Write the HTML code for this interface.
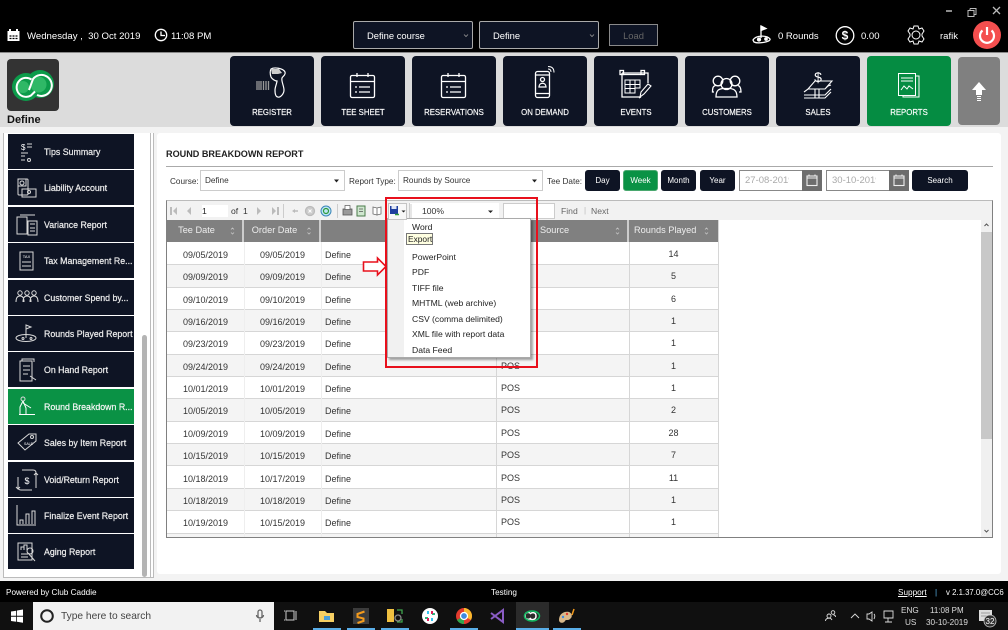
<!DOCTYPE html>
<html><head><meta charset="utf-8"><title>Round Breakdown Report</title>
<style>
html,body{margin:0;padding:0;width:1008px;height:630px;overflow:hidden;background:#f3f3f3}
body{position:relative;font-family:"Liberation Sans",sans-serif;color:#222}
div,span{position:absolute;box-sizing:border-box;white-space:nowrap}
.t{line-height:12px;height:12px}
.w{color:#fff}
.nav{top:56px;width:84px;height:70px;background:#0e1424;border-radius:4px;color:#fff;font-size:7.8px;text-align:center;padding-top:52px;line-height:10px;-webkit-text-stroke:.15px #fff}
.si{left:8px;width:126px;height:35px;background:#0e1424;color:#eee;font-size:8.8px;line-height:37px;padding-left:36px;-webkit-text-stroke:.2px #eee}
.btn{top:170px;height:21px;background:#0e1424;color:#fff;font-size:8px;text-align:center;line-height:22px;border-radius:3px}
.sel{top:170px;height:21px;background:#fff;border:1px solid #ccc;font-size:8.2px;line-height:20px;padding-left:4px;color:#333}
.lab{top:175px;font-size:8.2px;line-height:13px;color:#333}
.th{top:220px;height:22px;background:#808080;color:#eee;font-size:9.2px;line-height:21px;text-align:center;border-right:2px solid #ccc}
.r{left:167px;width:551px;height:22.35px;margin-top:1px;border-bottom:1.5px solid #d6d6d6;font-size:9px;color:#333;line-height:25px}
.r span{top:0}
.r .a{left:0;width:77px;text-align:center}
.r .b{left:77px;width:77px;text-align:center}
.r .c{left:158px}
.r .d{left:334px;top:-1px}
.r .e{left:462px;width:89px;text-align:center;top:-1px}
.g{background:#f4f4f4}
.m{left:412px;font-size:8.6px;line-height:12px;color:#222}
</style></head><body>

<div style="left:0;top:0;width:1008px;height:52px;background:#000"></div>
<div style="left:0;top:52px;width:1008px;height:78px;background:#dcdcdc;border-top:1px solid #888"></div>

<!-- header texts -->
<div class="t w" style="left:27px;top:31px;font-size:9.6px">Wednesday ,&nbsp; 30 Oct 2019</div>
<div class="t w" style="left:171px;top:31px;font-size:9.6px">11:08 PM</div>
<div style="left:353px;top:21px;width:120px;height:28px;background:#0e1424;border:1px solid #aaa;border-radius:2px;color:#fff;font-size:9.4px;line-height:28px;padding-left:13px">Define course</div>
<div style="left:479px;top:21px;width:120px;height:28px;background:#0e1424;border:1px solid #aaa;border-radius:2px;color:#fff;font-size:9.4px;line-height:28px;padding-left:13px">Define</div>
<div style="left:609px;top:24px;width:49px;height:22px;background:#0e1424;border:1px solid #8a8a8a;color:#666;font-size:9.4px;line-height:22px;text-align:center">Load</div>
<div class="t w" style="left:778px;top:31px;font-size:9.5px">0 Rounds</div>
<div class="t w" style="left:861px;top:31px;font-size:9.5px">0.00</div>
<div class="t w" style="left:940px;top:31px;font-size:9.5px">rafik</div>

<!-- logo -->
<div style="left:7px;top:59px;width:52px;height:52px;background:#333;border-radius:4px"></div>
<div class="t" style="left:7px;top:114px;font-size:11px;font-weight:bold;color:#111">Define</div>

<!-- nav -->
<div class="nav" style="left:230px">REGISTER</div>
<div class="nav" style="left:321px">TEE SHEET</div>
<div class="nav" style="left:412px">RESERVATIONS</div>
<div class="nav" style="left:503px">ON DEMAND</div>
<div class="nav" style="left:594px">EVENTS</div>
<div class="nav" style="left:685px">CUSTOMERS</div>
<div class="nav" style="left:776px">SALES</div>
<div class="nav" style="left:867px;background:#058c42">REPORTS</div>
<div style="left:958px;top:57px;width:42px;height:68px;background:#808080;border-radius:4px"></div>

<!-- body background -->
<div style="left:0;top:127px;width:1008px;height:454px;background:#f3f3f3"></div>
<div style="left:3px;top:133px;width:151px;height:445px;background:#fff;border:1px solid #bbb;border-top:none"></div>
<div style="left:150px;top:133px;width:1px;height:445px;background:#bbb"></div>
<div style="left:142px;top:335px;width:5px;height:242px;background:#b4b4b4;border-radius:3px"></div>

<!-- sidebar -->
<div class="si" style="top:134px">Tips Summary</div>
<div class="si" style="top:170.4px">Liability Account</div>
<div class="si" style="top:206.8px">Variance Report</div>
<div class="si" style="top:243.2px">Tax Management Re...</div>
<div class="si" style="top:279.6px">Customer Spend by...</div>
<div class="si" style="top:316px">Rounds Played Report</div>
<div class="si" style="top:352.4px">On Hand Report</div>
<div class="si" style="top:388.8px;background:#0a9245;color:#fff">Round Breakdown R...</div>
<div class="si" style="top:425.2px">Sales by Item Report</div>
<div class="si" style="top:461.6px">Void/Return Report</div>
<div class="si" style="top:498px">Finalize Event Report</div>
<div class="si" style="top:534.4px">Aging Report</div>

<!-- main panel -->
<div style="left:157px;top:133px;width:844px;height:441px;background:#fff;border-radius:3px"></div>
<div class="t" style="left:166px;top:148px;font-size:9.1px;font-weight:bold;color:#222">ROUND BREAKDOWN REPORT</div>
<div style="left:166px;top:166px;width:827px;height:1px;background:#aaa"></div>

<div class="lab" style="left:170px">Course:</div>
<div class="sel" style="left:200px;width:145px">Define</div>
<div class="lab" style="left:349px">Report Type:</div>
<div class="sel" style="left:398px;width:145px">Rounds by Source</div>
<div class="lab" style="left:547px">Tee Date:</div>
<div class="btn" style="left:585px;width:35px">Day</div>
<div class="btn" style="left:623px;width:35px;background:#0a9245;border:1px solid #4aa86f;line-height:20px">Week</div>
<div class="btn" style="left:661px;width:35px">Month</div>
<div class="btn" style="left:700px;width:35px">Year</div>
<div style="left:739px;top:170px;width:83px;height:21px;border:1px solid #888;background:#fff;color:#aaa;font-size:9.5px;line-height:20px;overflow:hidden"><span style="left:5px;top:0;width:44px;overflow:hidden">27-08-2019</span></div>
<div style="left:802px;top:170px;width:20px;height:21px;background:#6d6d6d"></div>
<div style="left:826px;top:170px;width:83px;height:21px;border:1px solid #888;background:#fff;color:#aaa;font-size:9.5px;line-height:20px;overflow:hidden"><span style="left:5px;top:0;width:44px;overflow:hidden">30-10-2019</span></div>
<div style="left:889px;top:170px;width:20px;height:21px;background:#6d6d6d"></div>
<div class="btn" style="left:912px;width:56px">Search</div>

<!-- report viewer -->
<div style="left:166px;top:200px;width:827px;height:338px;background:#fff;border:1px solid #808080;border-top-color:#bbb"></div>
<div style="left:167px;top:201px;width:825px;height:19px;background:#f2f2f2"></div>
<div class="t" style="left:202px;top:205px;font-size:8.6px;background:#fff;width:26px;color:#222">1</div>
<div class="t" style="left:231px;top:205px;font-size:8.6px;color:#333">of&nbsp; 1</div>
<div style="left:409px;top:203px;width:90px;height:16px;background:#fff;border-left:1px solid #ccc;font-size:8.6px;line-height:16px;padding-left:12px;color:#333">100%</div>
<div style="left:503px;top:203px;width:52px;height:16px;background:#fff;border:1px solid #ccc"></div>
<div class="t" style="left:561px;top:205px;font-size:8.6px;color:#666">Find</div>
<div class="t" style="left:584px;top:205px;font-size:8px;color:#bbb">|</div>
<div class="t" style="left:591px;top:205px;font-size:8.6px;color:#666">Next</div>

<!-- table -->
<div class="th" style="left:167px;width:77px;padding-right:16px">Tee Date</div>
<div class="th" style="left:244px;width:77px;padding-right:14px">Order Date</div>
<div class="th" style="left:321px;width:175px;padding-right:10px">Course</div>
<div class="th" style="left:496px;width:133px;text-align:left;padding-left:44px">Source</div>
<div class="th" style="left:629px;width:89px;padding-right:21px;border-right:none;padding-left:5px;text-align:left">Rounds Played</div>

<div class="r" style="top:242px"><span class="a">09/05/2019</span><span class="b">09/05/2019</span><span class="c">Define</span><span class="d">POS</span><span class="e">14</span></div>
<div class="r g" style="top:264.35px"><span class="a">09/09/2019</span><span class="b">09/09/2019</span><span class="c">Define</span><span class="d">POS</span><span class="e">5</span></div>
<div class="r" style="top:286.7px"><span class="a">09/10/2019</span><span class="b">09/10/2019</span><span class="c">Define</span><span class="d">POS</span><span class="e">6</span></div>
<div class="r g" style="top:309.05px"><span class="a">09/16/2019</span><span class="b">09/16/2019</span><span class="c">Define</span><span class="d">POS</span><span class="e">1</span></div>
<div class="r" style="top:331.4px"><span class="a">09/23/2019</span><span class="b">09/23/2019</span><span class="c">Define</span><span class="d">POS</span><span class="e">1</span></div>
<div class="r g" style="top:353.75px"><span class="a">09/24/2019</span><span class="b">09/24/2019</span><span class="c">Define</span><span class="d">POS</span><span class="e">1</span></div>
<div class="r" style="top:376.1px"><span class="a">10/01/2019</span><span class="b">10/01/2019</span><span class="c">Define</span><span class="d">POS</span><span class="e">1</span></div>
<div class="r g" style="top:398.45px"><span class="a">10/05/2019</span><span class="b">10/05/2019</span><span class="c">Define</span><span class="d">POS</span><span class="e">2</span></div>
<div class="r" style="top:420.8px"><span class="a">10/09/2019</span><span class="b">10/09/2019</span><span class="c">Define</span><span class="d">POS</span><span class="e">28</span></div>
<div class="r g" style="top:443.15px"><span class="a">10/15/2019</span><span class="b">10/15/2019</span><span class="c">Define</span><span class="d">POS</span><span class="e">7</span></div>
<div class="r" style="top:465.5px"><span class="a">10/18/2019</span><span class="b">10/17/2019</span><span class="c">Define</span><span class="d">POS</span><span class="e">11</span></div>
<div class="r g" style="top:487.85px"><span class="a">10/18/2019</span><span class="b">10/18/2019</span><span class="c">Define</span><span class="d">POS</span><span class="e">1</span></div>
<div class="r" style="top:510.2px"><span class="a">10/19/2019</span><span class="b">10/15/2019</span><span class="c">Define</span><span class="d">POS</span><span class="e">1</span></div>
<div style="left:167px;top:534px;width:551px;height:3px;background:#f4f4f4"></div>
<div style="left:243.5px;top:242px;width:1.5px;height:295px;background:#eee"></div>
<div style="left:320.5px;top:242px;width:1.5px;height:295px;background:#eee"></div>
<div style="left:496px;top:242px;width:1px;height:295px;background:#d6d6d6"></div>
<div style="left:629px;top:242px;width:1px;height:295px;background:#d6d6d6"></div>
<div style="left:718px;top:220px;width:1px;height:317px;background:#d6d6d6"></div>

<!-- viewer scrollbar -->
<div style="left:981px;top:220px;width:11px;height:317px;background:#f0f0f0"></div>
<div style="left:981px;top:232px;width:11px;height:207px;background:#c8c8c8"></div>

<!-- export menu -->
<div style="left:387px;top:218px;width:144px;height:140px;background:#fff;border:1px solid #aaa;box-shadow:2px 2px 2px rgba(0,0,0,.35)"></div>
<div style="left:388px;top:219px;width:16px;height:138px;background:#f1f1f1"></div>
<div class="m" style="top:221px">Word</div>
<div class="m" style="left:406px;top:233px;width:27px;height:12px;background:#ffffe1;border:1px solid #777;line-height:10px;padding-left:1px;font-size:8.4px">Export</div>
<div class="m" style="top:251px">PowerPoint</div>
<div class="m" style="top:266px">PDF</div>
<div class="m" style="top:282px">TIFF file</div>
<div class="m" style="top:297px">MHTML (web archive)</div>
<div class="m" style="top:313px">CSV (comma delimited)</div>
<div class="m" style="top:328px">XML file with report data</div>
<div class="m" style="top:344px">Data Feed</div>
<div style="left:385px;top:197px;width:153px;height:171px;border:2px solid #e8101c"></div>

<!-- footer -->
<div style="left:0;top:581px;width:1008px;height:21px;background:#000"></div>
<div class="t w" style="left:6px;top:587px;font-size:8.2px">Powered by Club Caddie</div>
<div class="t w" style="left:491px;top:587px;font-size:8.2px">Testing</div>
<div class="t w" style="left:898px;top:587px;font-size:8.2px;text-decoration:underline">Support</div>
<div class="t" style="left:935px;top:587px;font-size:8.2px;color:#5ab0e8">|</div>
<div class="t w" style="left:946px;top:587px;font-size:7.8px">v 2.1.37.0@CC6</div>

<!-- taskbar -->
<div style="left:0;top:602px;width:1008px;height:28px;background:#101010"></div>
<div style="left:33px;top:602px;width:241px;height:28px;background:#f2f2f2"></div>
<div class="t" style="left:61px;top:611px;font-size:10.2px;color:#444">Type here to search</div>
<div style="left:516px;top:602px;width:33px;height:28px;background:#2b2b2b"></div>
<div class="t" style="left:901px;top:605px;font-size:8.2px;color:#ddd">ENG</div>
<div class="t" style="left:905px;top:617px;font-size:8.2px;color:#ddd">US</div>
<div class="t" style="left:930px;top:605px;font-size:8px;color:#ddd">11:08 PM</div>
<div class="t" style="left:926px;top:617px;font-size:8.2px;color:#ddd">30-10-2019</div>

<!-- all icons overlay -->
<svg width="1008" height="630" viewBox="0 0 1008 630" style="position:absolute;left:0;top:0" fill="none" stroke="#fff" stroke-width="1.3">
<!-- header -->
<rect x="7.5" y="31" width="12" height="10" fill="#fff" stroke="none"/><path d="M10 29v4M17 29v4" stroke-width="2"/><path d="M9.5 36h8M9.5 38.500h8" stroke="#000" stroke-dasharray="2 1"/>
<circle cx="161" cy="35" r="5.700"/><path d="M161 31.500V35.500H165"/>
<path d="M468 34.500l-2 2-2-2M594 34.500l-2 2-2-2" stroke="#999" stroke-width=".8"/>
<path d="M753 40c3-5 14-5 17-1 1 3-12 5-16 3z"/><path d="M761 38V26"/><path d="M761 26l5 2.500-5 2z" fill="#fff"/><circle cx="759" cy="39.500" r="1.500" fill="#fff"/><circle cx="766" cy="39" r="1.200" fill="#fff"/>
<circle cx="845" cy="35.500" r="8.800"/><text x="845" y="39.500" font-family="Liberation Sans" font-size="12" font-weight="bold" text-anchor="middle" fill="#fff" stroke="none">$</text>
<path d="M914 26h4l1 3 3-1 2 3-2 3v2l2 3-2 3-3-1-1 3h-4l-1-3-3 1-2-3 2-3v-2l-2-3 2-3 3 1z" stroke-width="1"/><circle cx="916" cy="35" r="4" stroke-width="1"/>
<circle cx="987" cy="35" r="14" fill="#f44f4f" stroke="none"/><path d="M982.500 30.500a7 7 0 1 0 9 0M987 27v8" stroke-width="2.200"/>
<path d="M946 11h6" stroke="#bbb" stroke-width="1.500"/><path d="M970 8.500h6v6h-2M970 8.500v2M968 10.500h6v6h-6z" stroke="#bbb" stroke-width="1"/><path d="M993 7l7 7M1000 7l-7 7" stroke="#bbb" stroke-width="1.300"/>
<!-- logo -->
<circle cx="26" cy="87" r="14" fill="#0c9b4a" stroke="none"/><circle cx="40" cy="84" r="14" fill="#0c9b4a" stroke="none"/><circle cx="23" cy="87" r="6" fill="#2fb866" stroke="none"/><circle cx="38.500" cy="84.500" r="8" fill="#2fb866" stroke="none"/>
<path d="M31.500 79.500A9.500 9.500 0 1 0 31 95.500L35 91.500" stroke-width="2"/><path d="M29 90L33 79A10.500 10.500 0 1 1 37 95" stroke-width="2"/>
<!-- register -->
<path d="M257 81v9M259 81v9M261 81v9M263.500 81v9M266 81v9M268.500 81v9" stroke="#999" stroke-width="1.300"/>
<path d="M271 69c3-2 12-1 14 3 1 3-2 4-3 6-1 3 2 8 2 12 0 4-4 8-6 7-2 0-3-3-3-7 0-3 2-7 2-9-2 0-5-2-6-4-1-3-1-6 0-8z" stroke-width="1.200"/><path d="M271 69h8l3 4-4 1h-6z" fill="#ccc" stroke="none"/>
<!-- tee sheet + reservations -->
<g><rect x="350.500" y="75.500" width="24" height="22" rx="1.500"/><path d="M351 81.500h23M357 73v4M368 73v4M355 87h2M359 87h11M355 92h2M359 92h11"/></g>
<g transform="translate(91 0)"><rect x="350.500" y="75.500" width="24" height="22" rx="1.500"/><path d="M351 81.500h23M357 73v4M368 73v4M355 87h2M359 87h11M355 92h2M359 92h11"/></g>
<!-- on demand -->
<rect x="535.500" y="71.500" width="14" height="26" rx="2"/><path d="M536 93.500h13M536 75h13"/><circle cx="542.500" cy="79.500" r="2"/><path d="M539 87c0-5 7-5 7 0z"/><path d="M548 69c2 0 3 1 3 3M548 66.500c4 0 6 2 6 6" stroke-width="1"/>
<!-- events -->
<path d="M622 73h26v10M622 73v24h18"/><rect x="620" y="70.500" width="3.500" height="4"/><rect x="641" y="70.500" width="3.500" height="4"/><path d="M623 74.500h18"/><path d="M625 80h15v8h-5v5h-10zM630 80v13M635 80v13M625 84.500h15M625 88.500h10" stroke-width="1"/><path d="M640 97l1-5 7-8 3 2-7 8z M639 98l2-1" stroke-width="1.100"/>
<!-- customers -->
<circle cx="726.500" cy="84" r="5.500"/><circle cx="718" cy="81" r="4.800"/><circle cx="735" cy="81" r="4.800"/><path d="M716 97c0-8 4-8 7-8.500h7c3 .5 7 1 7 8.500zM714 92h-1.500c0-5 1-6 3-6.500M739 92h2c0-4-1-6-3-6.500"/>
<!-- sales -->
<path d="M808 89l7-8h17l-7 8zM804 92l4-3h17l3-3 3-1M804 95h21l6-6M804 98h21l6-6M815 89v9M819 89v9" stroke-width="1.100"/>
<text x="818" y="82" font-family="Liberation Sans" font-size="14" text-anchor="middle" fill="#fff" stroke="none">$</text>
<!-- reports -->
<rect x="898.500" y="73.500" width="17" height="22" stroke-width="1"/><path d="M915.500 76h3.500v21h-16v-1.500" stroke-width="1"/><path d="M901 78h12M901 81h12M901 90l3-4 3 3 2-3 4 3" stroke-width="1"/>
<!-- up arrow -->
<path d="M979 82l7 8h-4v5h-6v-5h-4z" fill="#fff" stroke="none"/><path d="M977 96.500h4M977 98.500h4M977 100.500h4" stroke-width=".9"/>
<!-- sidebar icons -->
<g stroke="#d8d8d8" stroke-width="1">
<text x="21" y="150" font-family="Liberation Sans" font-size="8" fill="#fff" stroke="none">$</text><path d="M27 144h5M27 147h5M21 153h7M21 156h4M21 160h4"/><circle cx="29" cy="160" r="1.500"/>
<rect x="18" y="179" width="10" height="16" rx="1"/><rect x="18" y="179" width="8" height="7"/><circle cx="22" cy="183" r="2"/><path d="M22 189h14v8H22z"/><circle cx="29" cy="192" r="1.500"/>
<rect x="17" y="217" width="10" height="17"/><rect x="28" y="221" width="9" height="14"/><path d="M20 215h15M30 224h5M30 228h5M30 231h5"/>
<rect x="20" y="252" width="13" height="18"/><text x="26.500" y="258" font-family="Liberation Sans" font-size="4" fill="#fff" stroke="none" text-anchor="middle">TAX</text><path d="M22 262h9M22 266h9"/>
<circle cx="20" cy="293" r="2.200"/><circle cx="27" cy="293" r="2.200"/><circle cx="34" cy="293" r="2.200"/><path d="M16 302c0-5 2-6 4-6s4 1 4 6M23 302c0-5 2-6 4-6s4 1 4 6M30 302c0-5 2-6 4-6s4 1 4 6"/>
<ellipse cx="26" cy="338" rx="10" ry="3.500"/><path d="M26 338v-13l5 2-5 2"/><circle cx="23" cy="338.500" r="1"/><circle cx="31" cy="338.500" r="1"/>
<path d="M20 361h12v20H20zM22 361v-2h12v3M23 366h7M23 370h7M23 374h5M30 376l6 4"/>
<circle cx="23" cy="399" r="2"/><path d="M23 401l-3 6v7M23 401l3 7v6M23 403l8 5M19 414.500h16" stroke="#fff"/>
<path d="M18 443l11-9h7v7l-11 9z"/><circle cx="32" cy="437" r="1.500"/><text x="24" y="445" font-family="Liberation Sans" font-size="3.500" fill="#fff" stroke="none">SALE</text>
<path d="M22 470h11c2 0 3 1 3 3M32 490H21c-2 0-3-1-3-3M18 477v12M16 487l2 2 2-2M36 488V473M34 475l2-2 2 2"/><text x="27" y="484" font-family="Liberation Sans" font-size="9" fill="#fff" stroke="none" text-anchor="middle">$</text>
<path d="M17 505v20h19M20 524v-4h3v4M26 524v-10h3v10M32 524v-13h3v13"/>
<rect x="18" y="543" width="14" height="17"/><path d="M21 550v-3h3v3M24 550v-5h3v5M21 554h7M21 557h7M28 553l7 8"/><circle cx="30" cy="551" r="3"/>
</g>
<!-- sort icons -->
<g stroke="#c4c4c4" stroke-width=".8"><path d="M231 229.500l1.500-1.500 1.500 1.500M231 232.500l1.500 1.500 1.500-1.500M307.500 229.500l1.500-1.500 1.500 1.500M307.500 232.500l1.500 1.500 1.500-1.500M616 229.500l1.500-1.500 1.500 1.500M616 232.500l1.500 1.500 1.500-1.500M705 229.500l1.500-1.500 1.500 1.500M705 232.500l1.500 1.500 1.500-1.500"/></g>
<!-- selects arrows -->
<path d="M334 179.500h5l-2.500 3zM532 179.500h5l-2.500 3z" fill="#222" stroke="none"/>
<!-- date icons -->
<g stroke="#eee" stroke-width="1.100"><rect x="807" y="176" width="10" height="9.500"/><path d="M807 178h10M809 174.500v2M815 174.500v2"/><rect x="894" y="176" width="10" height="9.500"/><path d="M894 178h10M896 174.500v2M902 174.500v2"/></g>
<!-- viewer toolbar -->
<g fill="#bbb" stroke="none"><path d="M170 207h2v8h-2zM177 207v8l-4-4zM191 207v8l-4-4zM257 207v8l4-4zM272 207v8l4-4zM277 207h2v8h-2z"/><path d="M295 209v4l-3-2z M295 210.300h3v1.400h-3z"/></g>
<path d="M283.500 204v14M337.500 204v14M411 204v14" stroke="#ccc" stroke-width="1"/>
<circle cx="310" cy="211" r="4.500" fill="#ccc" stroke="#bbb"/><path d="M308.500 209.500l3 3M311.500 209.500l-3 3" stroke="#fff" stroke-width="1"/>
<circle cx="326" cy="211" r="5" fill="#bfe6f5" stroke="#3a86b8" stroke-width="1"/><path d="M323.500 211a2.500 2.500 0 0 1 5 0M328.500 211a2.500 2.500 0 0 1-5 0" stroke="#2f9a3a" stroke-width="1.200"/>
<rect x="343" y="209" width="9" height="6" fill="#999" stroke="#555" stroke-width=".8"/><rect x="345" y="205.500" width="5" height="4" fill="#fff" stroke="#555" stroke-width=".7"/>
<rect x="357" y="206" width="8" height="10" fill="#cfe7cf" stroke="#4a7a4a" stroke-width="1"/><path d="M359 209h4M359 211.500h4" stroke="#555" stroke-width=".7"/>
<path d="M373 207l4 1v7l-4-1zM377 208l4-1v7l-4 1z" fill="#fff" stroke="#666" stroke-width=".8"/>
<rect x="388.500" y="203.500" width="18" height="16" fill="#f8f8f8" stroke="#c4c4c4" stroke-width="1"/>
<rect x="390" y="206" width="8" height="8" fill="#1f3f9f" stroke="none"/><rect x="391.500" y="206" width="5" height="3" fill="#dfe6f5" stroke="none"/><path d="M395 214.500h4" stroke="#2f9a3a" stroke-width="1.500"/><path d="M401.500 210.500h4l-2 2z" fill="#222" stroke="none"/>
<path d="M488 210.500h5l-2.500 2.500z" fill="#222" stroke="none"/>
<!-- viewer scroll arrows -->
<path d="M984.500 226l2-2 2 2M984.500 530l2 2 2-2" stroke="#555" stroke-width="1"/>
<!-- red arrow -->
<path d="M363.500 262h14v-4l8.500 8.500-8.500 8.500v-4h-14z" fill="#fff" stroke="#e8101c" stroke-width="1.600"/>
<!-- taskbar -->
<path d="M11 611.500l5.200-.8v5h-5.200zM17 610.500l6-1v6.200h-6zM11 616.800h5.200v5l-5.200-.8zM17 616.800h6v6l-6-1z" fill="#fff" stroke="none"/>
<circle cx="47" cy="616" r="5.800" stroke="#222" stroke-width="2"/>
<rect x="258" y="610" width="4" height="8" rx="2" stroke="#666"/><path d="M256.500 615c0 4 7 4 7 0M260 619v3" stroke="#666"/>
<path d="M286 611h8v9h-8zM284 611h1M284 620h1M296 611v9" stroke="#ccc" stroke-width="1"/>
<path d="M319 611h6l2 2h7v9h-15z" fill="#f6cf63" stroke="none"/><rect x="324" y="616" width="6" height="4" fill="#4a9ed8" stroke="none"/>
<rect x="353" y="608" width="16" height="16" fill="#3c3c3c" stroke="none"/><path d="M364.500 611.500l-7 2.500v3l6 1.500v2.500l-6 2" stroke="#f49b1c" stroke-width="2"/>
<rect x="387" y="609" width="7" height="13" fill="#f0c040" stroke="none"/><path d="M397 610h5v4M397 622h5v-3" stroke="#3fa34d"/><circle cx="398" cy="618" r="3" stroke="#888"/>
<circle cx="430" cy="616" r="8" fill="#fff" stroke="none"/><path d="M428 611v3M432 618v3" stroke="#36c5f0" stroke-width="2"/><path d="M425 618h3M432 614h3" stroke="#2eb67d" stroke-width="2"/><path d="M428 618v3M432 611v3" stroke="#e01e5a" stroke-width="2"/>
<circle cx="464" cy="616" r="8" fill="#e33b2e" stroke="none"/><path d="M464 616l-7 4a8 8 0 0 0 7 4z" fill="#2fa84f" stroke="none"/><path d="M464 616l7 4a8 8 0 0 0 1-4 8 8 0 0 0-8-8z" fill="#fbc02d" stroke="none" opacity=".95"/><circle cx="464" cy="616" r="3.500" fill="#3f8ae0" stroke="#fff"/>
<path d="M491 613l4 3-4 3M503 610l-8 6 8 6z" stroke="#8a5cc4" stroke-width="2"/>
<path d="M530 613c-2-1-5-1-5 3s4 4 6 2M530 619c2 1 6 1 6-3s-4-4-6-2" stroke="#fff" stroke-width="1.500"/><ellipse cx="532" cy="616" rx="7.500" ry="5" stroke="#10b860" stroke-width="1.500"/>
<path d="M559 620c0-6 5-9 10-8 3 1 4 5 1 7-2 2-4 0-5 2-2 3-6 2-6-1z" fill="#d9b98a" stroke="none"/><circle cx="563" cy="617" r="1.200" fill="#3f8ae0" stroke="none"/><circle cx="567" cy="614" r="1.200" fill="#e33b2e" stroke="none"/><path d="M572 615l2-6" stroke="#f49b1c" stroke-width="1.500"/>
<g stroke="#ddd" stroke-width=".9"><circle cx="829" cy="616" r="2"/><circle cx="833" cy="612.500" r="1.800"/><path d="M825.500 621c0-3 5-4 6.500-1M835.500 617c0-1.500-1-2-2-2"/><path d="M851 618l4-4 4 4"/><path d="M867 614h2l3-2v9l-3-2h-2zM874 614c1 1 1 3 0 5"/><path d="M884 611h9v7h-9zM888 618v4M885 622h7"/></g>
<path d="M979 610h13v11h-13z" fill="#ddd" stroke="none"/><path d="M981 613h9M981 616h9" stroke="#888" stroke-width=".8"/><circle cx="990" cy="621" r="6" fill="#333" stroke="#ccc" stroke-width=".8"/>
<text x="990" y="624" font-family="Liberation Sans" font-size="8" text-anchor="middle" fill="#fff" stroke="none">32</text>
<path d="M313 629h28M347 629h28M381 629h28M450 629h28M516 629h33M553 629h28" stroke="#5aaee8" stroke-width="2"/>
</svg>
</body></html>
